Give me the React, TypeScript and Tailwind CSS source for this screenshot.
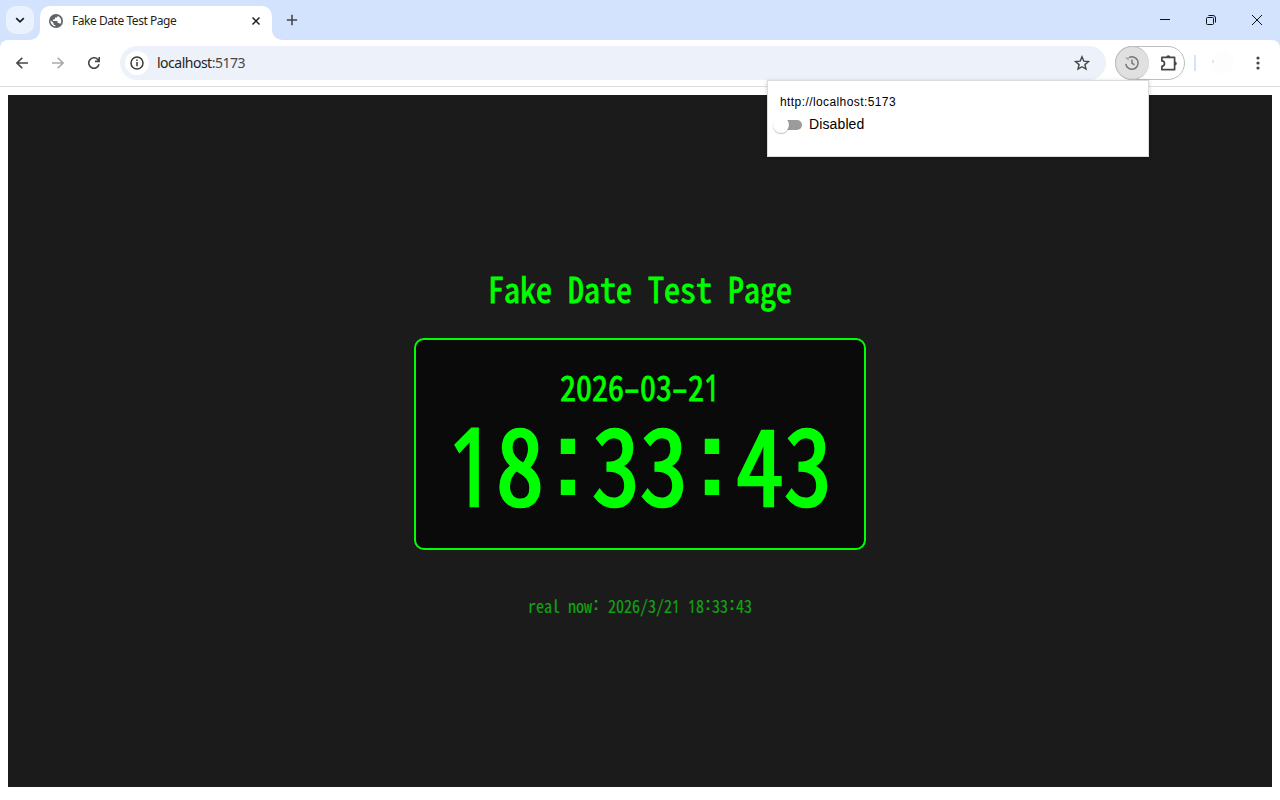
function MonoText({ text, className }: { text: string; className: string }) {
  return (
    <div className={`whitespace-pre font-['Noto_Sans_CJK_JP',monospace] [font-feature-settings:'hwid'] ${className}`}>
      {text.split(/([1:-])/).map((part, i) => {
        if (part === "1") {
          return (
            <span
              key={i}
              className="inline-block w-[0.49em] origin-[0.35em_50%] scale-x-[0.85] indent-[-0.06em] font-['Noto_Sans',sans-serif] text-[1.02em] leading-none"
            >
              1
            </span>
          );
        }
        if (part === ":") {
          return (
            <span
              key={i}
              className="ml-[0.07em] align-[0.1em] font-['Liberation_Sans',sans-serif] text-[1.06em] leading-none font-bold tracking-[0.0687em] [-webkit-text-stroke:0]"
            >
              :
            </span>
          );
        }
        if (part === "-") {
          return (
            <span key={i} className="inline-block scale-x-[1.3] leading-none">
              -
            </span>
          );
        }
        return part;
      })}
    </div>
  );
}

function TabStrip() {
  return (
    <div className="flex h-10 bg-[#d3e3fd]">
      <div className="flex w-10 shrink-0 items-start pt-[6px] pl-[6px]">
        <button className="flex h-7 w-7 items-center justify-center rounded-[10px] bg-[#ebf2ff]">
          <svg width="10" height="8" viewBox="0 0 10 8" fill="none" stroke="#1f1f1f" strokeWidth="1.8">
            <path d="M1.200 2.200 5 5.800 8.800 2.200" />
          </svg>
        </button>
      </div>
      <div className="relative mt-[6px] flex h-[34px] w-[232px] items-center rounded-t-[10px] bg-white pr-[10px] pb-[5px] pl-[9px]">
        <svg className="absolute bottom-0 -left-[10px]" width="10" height="10">
          <path d="M10 0v10H0A10 10 0 0 0 10 0" fill="#fff" />
        </svg>
        <svg className="absolute -right-[10px] bottom-0" width="10" height="10">
          <path d="M0 0v10h10A10 10 0 0 1 0 0" fill="#fff" />
        </svg>
        <svg width="14" height="14" viewBox="0 0 14 14">
          <circle cx="7" cy="7" r="7" fill="#5f6368" />
          <path d="M8.600 1.700v.6c0 .8-.6 1.300-1.400 1.300H6v1c0 .5-.4.9-1 .9H3.900v1.400h3.700c.6 0 1 .4 1 .9v1.300h.8c.8 0 1.400.5 1.700 1.200A5.600 5.600 0 0 0 8.600 1.700zM1.600 6.200 4.500 9v.7c0 .8.600 1.400 1.400 1.400h.4v1.400A5.600 5.600 0 0 1 1.600 6.200z" fill="#fff" />
        </svg>
        <span className="ml-[9px] flex-1 whitespace-nowrap font-['Noto_Sans',sans-serif] text-[12px] tracking-[-0.45px] text-[#1f1f1f]">
          Fake Date Test Page
        </span>
        <svg width="12" height="12" viewBox="0 0 12 12" stroke="#1f1f1f" strokeWidth="1.5">
          <path d="m2.500 2.500 7 7m0-7-7 7" />
        </svg>
      </div>
      <svg className="mt-[14px] ml-[14px]" width="12" height="12" viewBox="0 0 12 12" stroke="#474747" strokeWidth="1.6">
        <path d="M6 .8v10.400M.8 6h10.400" />
      </svg>
      <div className="ml-auto flex items-start gap-[36px] pt-[15px] pr-[18px]">
        <svg width="10" height="10" stroke="#111" strokeWidth="1">
          <path d="M0 4.500h10" />
        </svg>
        <svg width="10" height="10" viewBox="0 0 10 10" fill="none" stroke="#111">
          <rect x=".5" y="2.500" width="7" height="7" rx="1" />
          <path d="M2.500.5H7A2.500 2.500 0 0 1 9.500 3v4.500" />
        </svg>
        <svg width="10" height="10" viewBox="0 0 10 10" stroke="#111" strokeWidth="1">
          <path d="m0 0 10 10M10 0 0 10" />
        </svg>
      </div>
    </div>
  );
}

function Toolbar() {
  return (
    <div className="bg-[#d3e3fd]">
      <div className="flex h-[47px] items-start rounded-t-[8px] border-b border-[#dedede] bg-white pt-[6px]">
        <div className="flex h-[34px] w-[120px] items-center gap-[24px] pl-[16px]">
          <svg width="12" height="12" viewBox="0 0 12 12" fill="none" stroke="#474747" strokeWidth="1.600">
            <path d="M12 6H1M6.300.7 1 6l5.300 5.300" />
          </svg>
          <svg width="12" height="12" viewBox="0 0 12 12" fill="none" stroke="#aaa" strokeWidth="1.600">
            <path d="M0 6h11M5.700.7 11 6l-5.300 5.300" />
          </svg>
          <svg width="12" height="12" viewBox="0 0 12 12" fill="none" stroke="#474747" strokeWidth="1.600">
            <path d="M11 7.200A5.200 5.200 0 1 1 9.800 2.500L11 3.800M11.200 0v4.400H7" />
          </svg>
        </div>
        <div className="flex h-[34px] w-[986px] items-center rounded-full bg-[#ecf1fa] pr-[17px] pl-[5px]">
          <div className="flex h-6 w-6 items-center justify-center rounded-full bg-white">
            <svg width="14" height="14" viewBox="0 0 14 14" fill="none" stroke="#3a3a3a" strokeWidth="1.500">
              <circle cx="7" cy="7" r="6" />
              <path d="M7 6v4.200M7 3.500v1.500" />
            </svg>
          </div>
          <span className="ml-2 flex-1 pb-[2px] font-['Noto_Sans',sans-serif] text-[14px] tracking-[-0.5px] text-[#1f1f1f]">
            localhost<span className="text-[#474747]">:5173</span>
          </span>
          <svg width="16" height="16" viewBox="0 0 16 16" fill="none" stroke="#474747" strokeWidth="1.400" className="-mr-px">
            <path d="m8 1.800 1.800 4.300 4.700.4-3.600 3.100 1.100 4.500L8 11.700l-4 2.400 1.100-4.500-3.600-3.100 4.700-.4z" />
          </svg>
        </div>
        <div className="ml-[9px] flex h-[34px] w-[70px] items-center rounded-full border border-[#bdbdbd]">
          <div className="-ml-px flex h-[34px] w-[34px] items-center justify-center rounded-full border border-r-0 border-[#bdbdbd] bg-[#e0e0e0] pr-px">
            <svg width="16" height="16" viewBox="0 0 16 16" fill="none" stroke="#777" strokeWidth="1.500">
              <path d="M1.800 8.800A6.200 6.200 0 1 0 5 2.600" />
              <path d="M8 4.600v3.600l2.400 1.700" />
              <path d="M.8 2.500h4v3.300z" fill="#a6a6b5" stroke="none" />
            </svg>
          </div>
          <svg className="ml-[11px]" width="18" height="18" viewBox="0 0 18 18" fill="none" stroke="#474747" strokeWidth="1.700">
            <path d="M1.900 3.400h12.700v12.300H1.900v-3.400q2.600-.3 2.600-2.700T1.900 6.900z" strokeLinejoin="round" />
            <path d="M6.300 3.200a2 2 0 0 1 4 0zM14.800 7.400a2 2 0 0 1 0 4z" fill="#474747" stroke="none" />
          </svg>
        </div>
        <div className="mt-[9px] ml-[9px] h-4 w-[2px] bg-[#d3e3fd]" />
        <div className="mt-[6px] ml-[16px] flex h-[22px] w-[22px] items-start rounded-full bg-[#fdfdfd] pt-[8px]">
          <div className="h-[3px] w-[2px] rounded-full bg-[#e0e0e0]" />
        </div>
        <svg className="mt-[10px] ml-[22px]" width="4" height="14" fill="#474747">
          <circle cx="2" cy="2" r="1.600" />
          <circle cx="2" cy="7" r="1.600" />
          <circle cx="2" cy="12" r="1.600" />
        </svg>
      </div>
    </div>
  );
}

function ExtensionPopup() {
  return (
    <div className="absolute top-[80px] left-[767px] h-[77px] w-[382px] border border-[#dcdcdc] bg-white px-3 pt-[12px] font-['Liberation_Sans',sans-serif] text-black shadow-[0_1px_4px_rgba(0,0,0,0.2)]">
      <div className="text-[12px] leading-[18px] tracking-[0.41px]">http://localhost:5173</div>
      <div className="mt-[3px] flex items-center">
        <div className="-ml-[7px] flex h-[20px] w-[29px] items-center pt-[2px]">
          <div className="z-10 h-4 w-4 shrink-0 rounded-full bg-white shadow-[0_1px_1px_rgba(0,0,0,0.25)]" />
          <div className="-ml-[12px] h-[10px] w-[25px] rounded-full bg-[#9b9b9b]" />
        </div>
        <span className="ml-[7px] text-[14px] leading-[20px] tracking-[0.12px]">Disabled</span>
      </div>
    </div>
  );
}

export default function App() {
  return (
    <div className="relative flex h-[800px] w-[1280px] flex-col overflow-hidden bg-white">
      <TabStrip />
      <Toolbar />
      <main className="mx-2 mt-2 flex h-[692px] flex-col items-center bg-[#1b1b1b] pt-[169px] text-[#00ff00]">
        <MonoText
          text="Fake Date Test Page"
          className="h-[48px] scale-y-[1.1] text-[32px] leading-[48px] [-webkit-text-stroke:0.026em]"
        />
        <div className="mt-[26px] flex h-[212px] w-[452px] flex-col items-center rounded-[10px] border-2 border-[#00ff00] bg-[#0a0a0a] pt-[22px]">
          <MonoText
            text="2026-03-21"
            className="h-[48px] scale-y-[1.1] text-[32px] leading-[48px] [-webkit-text-stroke:0.022em]"
          />
          <MonoText
            text="18:33:43"
            className="-mt-[4px] h-[96px] scale-y-[1.1] text-[96px] leading-[96px] [-webkit-text-stroke:0.026em]"
          />
        </div>
        <MonoText
          text="real now: 2026/3/21 18:33:43"
          className="mt-[43px] h-[24px] scale-y-[1.1] text-[16px] leading-[24px] text-[#12a312] [-webkit-text-stroke:0.012em]"
        />
      </main>
      <ExtensionPopup />
    </div>
  );
}
